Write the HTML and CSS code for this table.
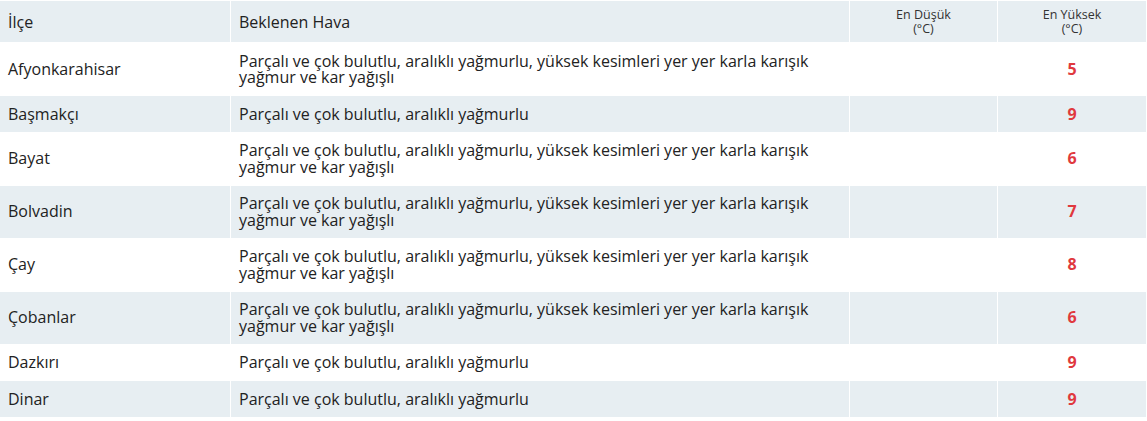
FILE: index.html
```html
<!DOCTYPE html>
<html lang="tr">
<head>
    <meta charset="UTF-8">
    <meta name="viewport" content="width=device-width, initial-scale=1.0">
    <title>İlçe Hava Tahmini</title>
    <link rel="stylesheet" href="styles.css">
</head>
<body>
    <table class="forecast">
        <thead>
            <tr>
                <th class="col-district">İlçe</th>
                <th class="col-weather">Beklenen Hava</th>
                <th class="col-temp">En Düşük<br>(°C)</th>
                <th class="col-temp col-last">En Yüksek<br>(°C)</th>
            </tr>
        </thead>
        <tbody>
            <tr>
                <td>Afyonkarahisar</td>
                <td>Parçalı ve çok bulutlu, aralıklı yağmurlu, yüksek kesimleri yer yer karla karışık yağmur ve kar yağışlı</td>
                <td class="temp"></td>
                <td class="temp high">5</td>
            </tr>
            <tr class="alt">
                <td>Başmakçı</td>
                <td>Parçalı ve çok bulutlu, aralıklı yağmurlu</td>
                <td class="temp"></td>
                <td class="temp high">9</td>
            </tr>
            <tr>
                <td>Bayat</td>
                <td>Parçalı ve çok bulutlu, aralıklı yağmurlu, yüksek kesimleri yer yer karla karışık yağmur ve kar yağışlı</td>
                <td class="temp"></td>
                <td class="temp high">6</td>
            </tr>
            <tr class="alt">
                <td>Bolvadin</td>
                <td>Parçalı ve çok bulutlu, aralıklı yağmurlu, yüksek kesimleri yer yer karla karışık yağmur ve kar yağışlı</td>
                <td class="temp"></td>
                <td class="temp high">7</td>
            </tr>
            <tr>
                <td>Çay</td>
                <td>Parçalı ve çok bulutlu, aralıklı yağmurlu, yüksek kesimleri yer yer karla karışık yağmur ve kar yağışlı</td>
                <td class="temp"></td>
                <td class="temp high">8</td>
            </tr>
            <tr class="alt">
                <td>Çobanlar</td>
                <td>Parçalı ve çok bulutlu, aralıklı yağmurlu, yüksek kesimleri yer yer karla karışık yağmur ve kar yağışlı</td>
                <td class="temp"></td>
                <td class="temp high">6</td>
            </tr>
            <tr>
                <td>Dazkırı</td>
                <td>Parçalı ve çok bulutlu, aralıklı yağmurlu</td>
                <td class="temp"></td>
                <td class="temp high">9</td>
            </tr>
            <tr class="alt">
                <td>Dinar</td>
                <td>Parçalı ve çok bulutlu, aralıklı yağmurlu</td>
                <td class="temp"></td>
                <td class="temp high">9</td>
            </tr>
        </tbody>
    </table>
</body>
</html>
```

FILE: styles.css
```css
body {
    margin: 0;
    padding: 1px 0 0 0;
    font-family: 'Open Sans', 'Noto Sans', sans-serif;
    color: #222;
    background: #fff;
}

.forecast {
    width: 1147px;
    table-layout: fixed;
    border-collapse: separate;
    border-spacing: 0;
}

.forecast th,
.forecast td {
    box-sizing: border-box;
    border-right: 1px solid #fff;
    border-bottom: 1px solid #fff;
    vertical-align: middle;
}

.forecast th {
    background: #e7eef2;
    font-weight: 400;
    text-align: left;
    font-size: 16px;
    height: 42px;
    padding: 0 8px;
}

.col-district {
    width: 231px;
}

.col-weather {
    width: 619px;
}

.forecast th.col-temp {
    width: 148px;
    text-align: center;
    font-size: 12.5px;
    line-height: 13.5px;
    color: #333;
}

.forecast th.col-last {
    width: 149px;
}

.forecast td {
    font-size: 16px;
    line-height: 16.5px;
    padding: 9.5px 8px;
}

.forecast tr.alt td {
    background: #e7eef2;
}

.forecast td.temp {
    text-align: center;
}

.forecast td.high {
    color: #e0393e;
    font-weight: 700;
}
```
